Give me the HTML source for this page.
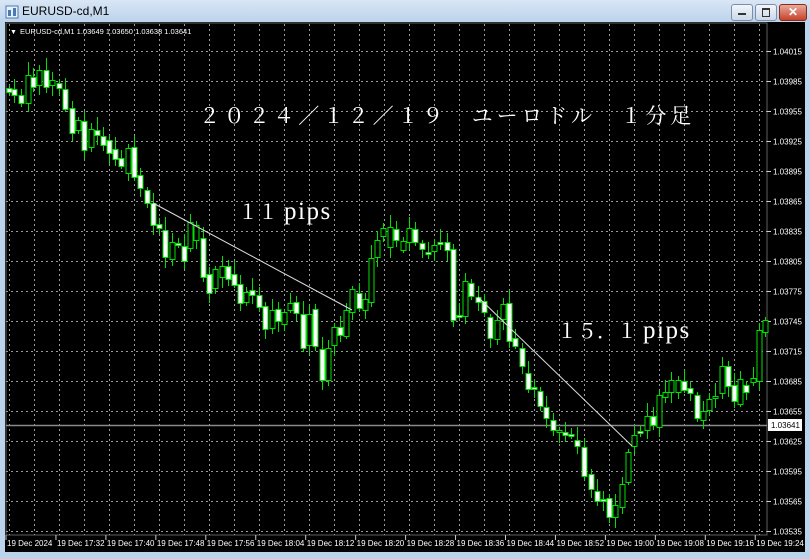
<!DOCTYPE html>
<html><head><meta charset="utf-8">
<style>
body{margin:0;width:810px;height:559px;overflow:hidden;background:#bcd3ec;font-family:"Liberation Sans",sans-serif;}
#win{position:absolute;left:0;top:0;width:810px;height:559px;background:linear-gradient(#d9e6f5,#bcd3ec 22px,#bcd3ec);}
#title{position:absolute;left:22px;top:4px;font-size:12px;color:#000;}
.btn{position:absolute;top:4px;height:15px;border:1px solid #7d8fa8;border-radius:3px;background:linear-gradient(#f2f6fb,#cbd8e8);}
#chart{position:absolute;left:5px;top:22px;width:800px;height:530px;background:#000;}
svg{position:absolute;left:0;top:0}
</style></head><body>
<div id="win">
<svg width="16" height="16" style="left:4px;top:4px"><rect x="2" y="2" width="12" height="12" fill="#e8f0fa" stroke="#4a79b5"/><rect x="4" y="6" width="3" height="6" fill="#4a79b5"/><rect x="9" y="4" width="3" height="8" fill="#4a79b5"/></svg>
<div id="title">EURUSD-cd,M1</div>
<div class="btn" style="left:731px;width:20px"><div style="position:absolute;left:6px;top:8px;width:8px;height:2px;background:#333"></div></div>
<div class="btn" style="left:755px;width:20px"><div style="position:absolute;left:6px;top:3px;width:6px;height:6px;border:1px solid #333;border-top-width:2px"></div></div>
<div class="btn" style="left:779px;width:26px;background:linear-gradient(#e9a99a,#c7422a);border-color:#8a2a1a;color:#fff;font-size:12px;font-weight:bold;text-align:center;line-height:15px">✕</div>
</div>
<div id="chart"></div>
<svg id="s" width="810" height="559"></svg>
<script>
var s=document.getElementById('s'),h='';
h+='<rect x="6" y="23" width="761" height="512" fill="none" stroke="#606060" stroke-width="1"/>';
for(var x=9.5;x<767;x+=25){h+='<line x1="'+x+'" y1="24" x2="'+x+'" y2="535" stroke="#9a9a9a" stroke-dasharray="2,3"/>';}
var prices=["1.04015","1.03985","1.03955","1.03925","1.03895","1.03865","1.03835","1.03805","1.03775","1.03745","1.03715","1.03685","1.03655","1.03625","1.03595","1.03565","1.03535"];
var ys=[51,81,111,141,171,201,231,261,291,321,351,381,411,441,471,501,531];
for(var i=0;i<ys.length;i++){h+='<line x1="6" y1="'+(ys[i]+.5)+'" x2="767" y2="'+(ys[i]+.5)+'" stroke="#9a9a9a" stroke-dasharray="2,3"/>';
h+='<line x1="767" y1="'+(ys[i]+.5)+'" x2="771" y2="'+(ys[i]+.5)+'" stroke="#ccc"/>';
h+='<text x="773" y="'+(ys[i]+3.5)+'" fill="#fff" font-size="8" font-family="Liberation Sans">'+prices[i]+'</text>';}
h+='<line x1="6" y1="425.5" x2="767" y2="425.5" stroke="#8a8a8a" stroke-width="1.5"/>';
h+='<rect x="768" y="419" width="34" height="12" fill="#fff"/><text x="771" y="428" font-size="8" fill="#000" font-family="Liberation Sans">1.03641</text>';
var tl=["19 Dec 2024","19 Dec 17:32","19 Dec 17:40","19 Dec 17:48","19 Dec 17:56","19 Dec 18:04","19 Dec 18:12","19 Dec 18:20","19 Dec 18:28","19 Dec 18:36","19 Dec 18:44","19 Dec 18:52","19 Dec 19:00","19 Dec 19:08","19 Dec 19:16","19 Dec 19:24"];
for(var i=0;i<tl.length;i++){var tx=7+i*49.95;h+='<line x1="'+(tx-1)+'" y1="535" x2="'+(tx-1)+'" y2="540" stroke="#ccc"/><text x="'+tx+'" y="546" fill="#fff" font-size="8" font-family="Liberation Sans">'+tl[i]+'</text>';}
var c=[[9,88,92,0],[14,89,95,0],[21,95,103,0],[28,75,103,1],[33,77,87,0],[39,70,85,1],[46,70,87,0],[52,80,85,1],[59,83,88,0],[65,89,109,0],[72,108,133,0],[78,120,130,1],[84,121,150,0],[91,129,147,1],[97,130,135,0],[103,136,145,0],[109,140,153,0],[115,149,159,0],[121,158,166,0],[128,148,173,1],[134,147,177,0],[140,175,188,0],[147,190,203,0],[153,203,225,0],[159,224,228,0],[165,230,257,0],[172,242,259,1],[178,243,245,0],[184,246,261,0],[190,222,248,1],[196,225,240,1],[203,238,277,0],[209,274,293,0],[215,269,288,1],[222,266,277,1],[228,266,279,0],[234,274,285,0],[240,284,303,0],[246,292,302,1],[252,290,295,0],[259,295,307,0],[265,306,329,0],[272,310,328,1],[278,309,321,0],[284,312,324,1],[290,303,310,1],[296,302,313,0],[303,314,348,0],[309,314,345,1],[315,309,346,0],[322,349,380,0],[328,348,380,1],[334,327,345,1],[340,327,335,0],[346,310,336,1],[352,289,312,1],[359,293,308,0],[365,299,310,1],[371,258,302,1],[377,240,257,1],[383,228,236,1],[390,227,247,1],[396,229,240,0],[403,241,250,1],[409,228,242,1],[415,229,242,0],[422,243,249,0],[428,252,254,0],[434,245,251,1],[440,242,244,0],[447,242,250,0],[453,249,320,0],[459,315,317,0],[465,281,316,1],[471,283,296,0],[478,297,302,0],[484,301,312,0],[490,317,338,0],[497,320,339,1],[503,304,319,1],[509,303,341,0],[515,338,346,0],[522,348,366,0],[528,373,389,0],[534,387,389,0],[540,391,406,0],[546,407,418,0],[553,420,430,0],[559,430,432,1],[565,432,435,0],[571,434,436,0],[577,440,446,0],[584,447,476,0],[591,474,489,0],[597,491,501,0],[603,499,501,0],[609,498,517,0],[615,505,517,1],[622,484,507,1],[628,452,482,1],[634,435,446,1],[640,431,433,0],[647,416,430,1],[653,416,425,0],[659,395,427,1],[665,392,397,1],[671,380,392,1],[678,380,392,1],[684,381,390,0],[690,388,393,0],[697,395,418,0],[703,411,420,1],[709,399,410,1],[715,396,398,1],[722,366,393,1],[728,366,386,0],[734,385,401,0],[740,379,404,1],[746,385,392,0],[753,378,382,1],[759,330,381,1],[765,320,332,1]];
for(var i=0;i<c.length;i++){var d=c[i],wt=3+((i*7)%11),wb=3+((i*5)%9);
h+='<line x1="'+(d[0]+.5)+'" y1="'+(d[1]-wt)+'" x2="'+(d[0]+.5)+'" y2="'+(d[2]+wb)+'" stroke="#00e000"/>';
h+='<rect x="'+(d[0]-2)+'" y="'+(d[1]+.5)+'" width="5" height="'+Math.max(1,d[2]-d[1])+'" fill="'+(d[3]?'#000':'#fff')+'" stroke="#00e000"/>';}
h+='<line x1="153" y1="203" x2="352" y2="310" stroke="#ddd"/><line x1="478" y1="297" x2="632" y2="446" stroke="#ddd"/>';
h+='<text x="10" y="34" fill="#fff" font-size="7">▼</text><text x="20" y="34" fill="#fff" font-size="7.5" font-family="Liberation Sans">EURUSD-cd,M1  1.03649 1.03650 1.03638 1.03641</text>';
var f='font-family="Liberation Serif,Noto Serif CJK SC,serif" fill="#fff"';
h+='<text x="199" y="123" font-size="21" '+f+' letter-spacing="3.8">２０２４／１２／１９　ユーロドル　１分足</text>';
h+='<text x="238" y="219" font-size="20" '+f+'>１１<tspan dx="6" font-size="25" letter-spacing="1.5">pips</tspan></text>';
h+='<text x="557" y="338" font-size="20" '+f+'>１５．１<tspan dx="6" font-size="25" letter-spacing="1.5">pips</tspan></text>';
s.innerHTML=h;
</script>
</body></html>
